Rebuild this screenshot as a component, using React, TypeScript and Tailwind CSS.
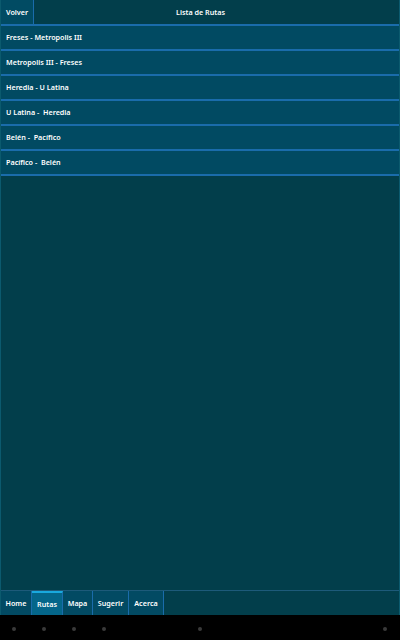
import React from "react";

const rutas = [
  "Freses - Metropolis III",
  "Metropolis III - Freses",
  "Heredia - U Latina",
  "U Latina -  Heredia",
  "Belén -  Pacífico",
  "Pacífico -  Belén",
];

const tabs = ["Home", "Rutas", "Mapa", "Sugerir", "Acerca"];
const tabW = ["w-[31px]", "w-[31px]", "w-[30px]", "w-[36px]", "w-[35px]"];

export default function App() {
  return (
    <div
      className="w-[400px] h-[640px] flex flex-col bg-black text-white text-[7.2px] font-semibold"
      style={{ fontFamily: '"Noto Sans", "Open Sans", sans-serif' }}
    >
      <div className="flex-1 flex flex-col bg-[#023e4b] border-x border-[#0b5a6e]">
        <div className="h-[26px] flex border-b-2 border-[#1a6cab]">
          <div className="w-[33px] bg-[#014b63] border-r border-[#1a6cab] flex items-center pl-[5px]">
            Volver
          </div>
          <div className="flex-1 flex items-center justify-center pr-[32px]">
            Lista de Rutas
          </div>
        </div>
        {rutas.map((r) => (
          <div
            key={r}
            className="h-[25px] bg-[#014a62] border-b-2 border-[#1a6cab] flex items-center pl-[5px] whitespace-pre"
          >
            {r}
          </div>
        ))}
        <div className="flex-1" />
        <div className="h-[25px] flex border-t border-[#1d5a7a] bg-[#023e4b]">
          {tabs.map((t, i) => (
            <div
              key={t}
              className={
                i === 1
                  ? "w-[31px] flex items-center justify-center bg-[#04668a] border-t-2 border-[#19a9df] border-r border-r-[#1a6cab]"
                  : `${tabW[i]} flex items-center justify-center bg-[#024a63] border-r border-[#1a6cab]`
              }
            >
              {t}
            </div>
          ))}
        </div>
      </div>
      <div className="h-[25px] bg-black flex items-center relative">
        {[14, 44, 74, 104, 200, 385].map((x) => (
          <span
            key={x}
            className="absolute top-[12px] w-[4px] h-[4px] rounded-full bg-[#3a3a3a]"
            style={{ left: x - 2 }}
          />
        ))}
      </div>
    </div>
  );
}
